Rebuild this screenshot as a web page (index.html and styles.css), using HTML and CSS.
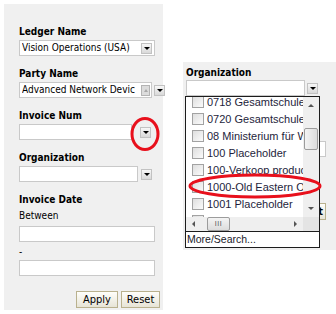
FILE: index.html
```html
<!DOCTYPE html>
<html>
<head>
<meta charset="utf-8">
<link rel="stylesheet" href="styles.css">
</head>
<body>
<div class="page">
  <div class="panel left">
    <div class="field">
      <div class="label">Ledger Name</div>
      <div class="box w136">
        <span class="val">Vision Operations (USA)</span>
        <span class="drop inner"></span>
      </div>
    </div>
    <div class="field">
      <div class="label">Party Name</div>
      <div class="row">
        <div class="box w133">
          <span class="val">Advanced Network Devic</span>
          <span class="spin"></span>
        </div>
        <span class="drop gap2"></span>
      </div>
    </div>
    <div class="field">
      <div class="label">Invoice Num</div>
      <div class="row">
        <div class="box w113"></div>
        <span class="drop gap8"></span>
      </div>
    </div>
    <div class="field">
      <div class="label">Organization</div>
      <div class="row">
        <div class="box w119"></div>
        <span class="drop gap3"></span>
      </div>
    </div>
    <div class="label">Invoice Date</div>
    <div class="sub">Between</div>
    <div class="box w136 mt4"></div>
    <div class="sub">-</div>
    <div class="box w136 mt2"></div>
    <div class="buttons">
      <button class="btn apply" type="button">Apply</button>
      <button class="btn reset" type="button">Reset</button>
    </div>
  </div>

  <div class="panel right">
    <div class="label">Organization</div>
    <div class="row">
      <div class="box w119"></div>
      <span class="drop gap2"></span>
    </div>
    <div class="box ghost-input"></div>
    <button class="btn ghost-btn" type="button">t</button>

    <div class="popup">
      <div class="list">
        <div class="items">
          <div class="items-inner">
            <div class="item"><span class="cb"></span>0718 Gesamtschule</div>
            <div class="item"><span class="cb"></span>0720 Gesamtschule</div>
            <div class="item"><span class="cb"></span>08 Ministerium für W</div>
            <div class="item"><span class="cb"></span>100 Placeholder</div>
            <div class="item"><span class="cb"></span>100-Verkoop produc</div>
            <div class="item"><span class="cb"></span>1000-Old Eastern O</div>
            <div class="item"><span class="cb"></span>1001 Placeholder</div>
            <div class="item"><span class="cb"></span></div>
          </div>
        </div>
        <div class="vscroll">
          <div class="sbtn"><span class="tri up"></span></div>
          <div class="track"><div class="vthumb"></div></div>
          <div class="sbtn"><span class="tri down"></span></div>
        </div>
      </div>
      <div class="hbar">
        <div class="hscroll">
          <div class="hbtn"><span class="tri left-t"></span></div>
          <div class="htrack"><div class="hthumb">III</div></div>
          <div class="hbtn"><span class="tri right-t"></span></div>
        </div>
        <div class="corner"></div>
      </div>
      <div class="footer">More/Search...</div>
    </div>
  </div>

  <svg class="marks" width="336" height="314" viewBox="0 0 336 314">
    <ellipse cx="145" cy="134" rx="13" ry="15.5" fill="none" stroke="#e8101c" stroke-width="3"/>
    <ellipse cx="255" cy="186" rx="65" ry="11" fill="none" stroke="#e8101c" stroke-width="3"/>
  </svg>
</div>
</body>
</html>
```

FILE: styles.css
```css
* { box-sizing: border-box; }
html, body { margin: 0; padding: 0; background: #fff; }
body {
  font-family: "DejaVu Sans Condensed", "DejaVu Sans", sans-serif;
  font-size: 10px;
  color: #000;
}
.page {
  position: relative;
  display: flex;
  align-items: flex-start;
  padding: 4px 0 0 4px;
  height: 314px;
  overflow: hidden;
}
.panel { background: #f0f0f0; }
.left {
  width: 159px;
  height: 306px;
  padding: 22px 3px 0 15px;
}
.label {
  font-weight: bold;
  line-height: 12px;
  height: 12px;
  margin-bottom: 2px;
  white-space: nowrap;
}
.field { margin-bottom: 12px; }
.row { display: flex; align-items: center; height: 16px; }
.box {
  height: 16px;
  background: #fff;
  border: 1px solid #c9c9c9;
  display: flex;
  align-items: center;
  padding-left: 2px;
  overflow: hidden;
  white-space: nowrap;
  line-height: 14px;
  flex: none;
}
.val { flex: 1; overflow: hidden; white-space: nowrap; }
.w136 { width: 136px; }
.w133 { width: 133px; }
.w119 { width: 119px; }
.w113 { width: 113px; }
.mt4 { margin-top: 4px; }
.mt2 { margin-top: 2px; }
.drop {
  width: 11px;
  height: 11px;
  border: 1px solid #c2c2c2;
  background: linear-gradient(#f7f7f7, #d9d9d9);
  display: flex;
  align-items: center;
  justify-content: center;
  flex: none;
}
.drop::after {
  content: "";
  border-left: 3px solid transparent;
  border-right: 3px solid transparent;
  border-top: 3px solid #000;
}
.drop.inner { margin-right: 2px; }
.gap2 { margin-left: 2px; }
.gap3 { margin-left: 3px; }
.gap8 { margin-left: 8px; }
.spin {
  width: 9px;
  height: 11px;
  margin-right: 1px;
  border: 1px solid #b4b4b4;
  background: #dcdcdc;
  display: flex;
  align-items: center;
  justify-content: center;
  flex: none;
}
.spin::after {
  content: "";
  border-left: 2px solid transparent;
  border-right: 2px solid transparent;
  border-bottom: 3px solid #a8a8a8;
}
.sub { line-height: 12px; height: 12px; margin-top: 4px; }
.buttons {
  display: flex;
  justify-content: flex-end;
  gap: 3px;
  margin-top: 15px;
}
.btn {
  height: 17px;
  padding: 0;
  border: 1px solid #b9b18e;
  background: linear-gradient(#fefefb, #e7e4d6);
  font-family: "DejaVu Sans Condensed", "DejaVu Sans", sans-serif;
  font-size: 11px;
  color: #000;
  line-height: 15px;
}
.apply { width: 42px; }
.reset { width: 39px; }

.right {
  position: relative;
  width: 153px;
  height: 188px;
  margin: 58px 0 0 20px;
  padding: 5px 0 0 3px;
}
.right .label { margin-bottom: 1px; }
.ghost-input { width: 70px; margin: 45px 10px 0 auto; }
.ghost-btn {
  display: block;
  width: 12px;
  margin: 46px 10px 0 auto;
  text-align: right;
  padding-right: 2px;
  font-weight: bold;
}

.popup {
  position: absolute;
  left: 2px;
  top: 34px;
  width: 135px;
  border: 1px solid #1c1c1c;
  background: #fff;
}
.list { display: flex; height: 120px; }
.items { width: 117px; height: 120px; overflow: hidden; }
.items-inner { margin-top: -4px; }
.item {
  display: flex;
  align-items: center;
  height: 17px;
  white-space: nowrap;
  font-family: "Liberation Sans", Arial, sans-serif;
  font-size: 11px;
  color: #1e1e3c;
}
.cb {
  width: 12px;
  height: 12px;
  margin: 0 3px 0 6px;
  border: 1px solid #a2a2a2;
  background: linear-gradient(135deg, #dedede, #fbfbfb);
  flex: none;
}
.vscroll {
  width: 16px;
  display: flex;
  flex-direction: column;
  background: #efefef;
}
.sbtn {
  height: 17px;
  display: flex;
  align-items: center;
  justify-content: center;
  flex: none;
}
.track { flex: 1; padding-top: 14px; }
.vthumb {
  height: 22px;
  margin: 0 1px;
  border: 1px solid #9c9c9c;
  border-radius: 2px;
  background: linear-gradient(90deg, #f4f4f4, #dcdcdc);
}
.tri { width: 0; height: 0; }
.tri.up { border-left: 3px solid transparent; border-right: 3px solid transparent; border-bottom: 3px solid #555; }
.tri.down { border-left: 3px solid transparent; border-right: 3px solid transparent; border-top: 3px solid #555; }
.tri.left-t { border-top: 3px solid transparent; border-bottom: 3px solid transparent; border-right: 3px solid #555; }
.tri.right-t { border-top: 3px solid transparent; border-bottom: 3px solid transparent; border-left: 3px solid #555; }
.hbar { display: flex; height: 14px; }
.hscroll { width: 117px; display: flex; background: #efefef; }
.hbtn { width: 15px; display: flex; align-items: center; justify-content: center; flex: none; }
.htrack { flex: 1; padding-left: 6px; }
.hthumb {
  width: 23px;
  height: 14px;
  border: 1px solid #9c9c9c;
  border-radius: 2px;
  background: linear-gradient(#f4f4f4, #dcdcdc);
  font-family: "Liberation Sans", Arial, sans-serif;
  font-size: 7px;
  line-height: 12px;
  text-align: center;
  color: #555;
  letter-spacing: 0.5px;
}
.corner { width: 16px; background: #e4e4e4; }
.footer {
  border-top: 1px solid #1c1c1c;
  height: 16px;
  line-height: 15px;
  padding-left: 1px;
  font-family: "Liberation Sans", Arial, sans-serif;
  font-size: 10.5px;
  color: #1a1a2a;
  white-space: nowrap;
}
.marks {
  position: absolute;
  left: 0;
  top: 0;
  pointer-events: none;
}
```
